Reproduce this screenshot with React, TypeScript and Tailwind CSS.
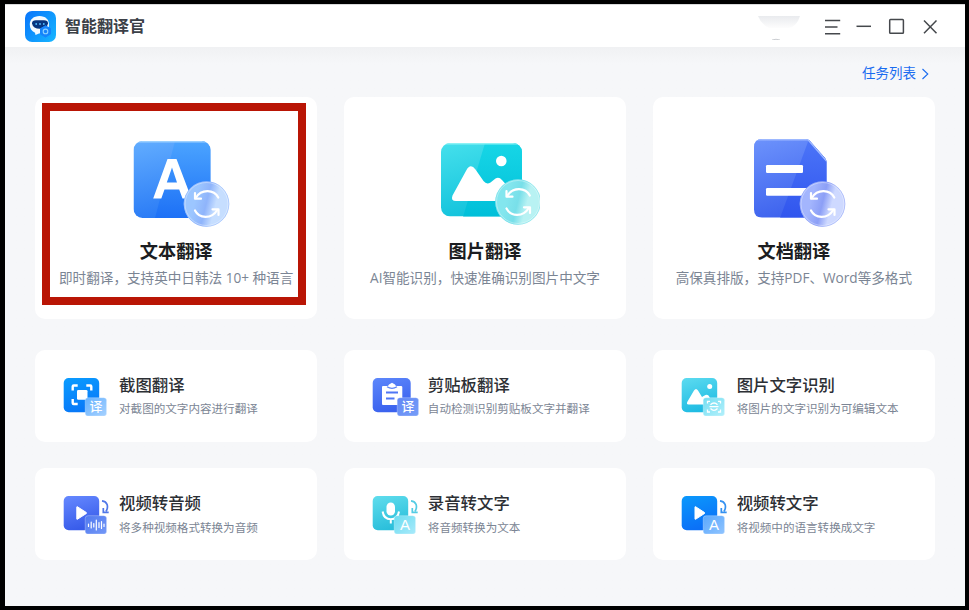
import React from "react";

const FONT = "font-['Open_Sans','Noto_Sans_CJK_SC',sans-serif]";

type Stops = [string, string];

function Gradient({ id, stops, x2 = 0.3 }: { id: string; stops: Stops; x2?: number }) {
  return (
    <linearGradient id={id} x1="0" y1="0" x2={x2} y2="1">
      <stop offset="0" stopColor={stops[0]} />
      <stop offset="1" stopColor={stops[1]} />
    </linearGradient>
  );
}

/* Round glass badge with two circular arrows */
function SyncBadge({ id, cx, cy, tones }: { id: string; cx: number; cy: number; tones: [string, string, string] }) {
  return (
    <g transform={`translate(${cx} ${cy})`}>
      <defs>
        <linearGradient id={id} x1="0" y1="0.35" x2="1" y2="0.6">
          <stop offset="0" stopColor={tones[0]} />
          <stop offset="0.25" stopColor={tones[0]} />
          <stop offset="0.5" stopColor={tones[1]} />
          <stop offset="0.7" stopColor={tones[2]} />
          <stop offset="1" stopColor={tones[2]} />
        </linearGradient>
      </defs>
      <circle r="22.8" fill={`url(#${id})`} />
      <circle r="22.3" fill="none" stroke={tones[1]} strokeOpacity="0.5" strokeWidth="1" />
      <circle r="21.5" fill="none" stroke="#fff" strokeOpacity="0.35" strokeWidth="1" />
      <g fill="none" stroke="#fff" strokeWidth="2.2" strokeLinecap="round" strokeLinejoin="round">
        <path d="M11.800 -6.500C7.500 -14.500 -5 -15.500 -10.800 -6" />
        <path d="M-11.500 -11V-5.300H-5.500" />
        <path d="M-11.500 6.500C-7.500 14.500 5 15.500 10.800 6" />
        <path d="M12 11V5.300H6" />
      </g>
    </g>
  );
}

function TextArt() {
  return (
    <svg width="110" height="96" viewBox="0 0 110 96" className="block">
      <defs>
        <Gradient id="ta" stops={["#62adff", "#2b7cf6"]} x2={0.2} />
        <Gradient id="tb" stops={["#4ba4ff", "#1d70f6"]} x2={0} />
        <clipPath id="tc"><rect x="12.5" y="6" width="77" height="77" rx="9" /></clipPath>
      </defs>
      <g clipPath="url(#tc)">
        <rect x="12.5" y="6" width="77" height="77" fill="url(#ta)" />
        <path d="M54 6H90V83H34Z" fill="url(#tb)" />
        <path d="M12 6.7H90" stroke="#9bd0ff" strokeWidth="1.5" />
      </g>
      <path fillRule="evenodd" fill="#fff" d="M46.500 24H55.500L70.500 63.500H61.500L58.200 54.500H43.500L40.300 63.500H32.200ZM51 32.500L45.800 47.500H56Z" />
      <SyncBadge id="ts" cx={85.5} cy={69} tones={["#9cc6ff", "#8fb4fb", "#c6deff"]} />
    </svg>
  );
}

function ImageArt() {
  return (
    <svg width="110" height="96" viewBox="0 0 110 96" className="block">
      <defs>
        <Gradient id="ia" stops={["#45e0ec", "#13c3dc"]} />
        <Gradient id="ib" stops={["#17d6e6", "#00bfd9"]} x2={0} />
        <clipPath id="ic"><rect x="11" y="8" width="81" height="73.500" rx="9" /></clipPath>
      </defs>
      <g clipPath="url(#ic)">
        <rect x="11" y="8" width="81" height="73.500" fill="url(#ia)" />
        <path d="M55 8H92V82H33Z" fill="url(#ib)" />
        <path d="M11 8.700H92" stroke="#8bf2f5" strokeWidth="1.500" />
      </g>
      <circle cx="71.300" cy="26" r="5.300" fill="#fff" />
      <path d="M22.500 60.500L36.500 35Q40.500 28 45.500 34.500L53.500 46Q56.500 50 60.500 47.500L65.500 43.500Q69 41.500 72 45L80 54V66H26Q20.500 66 22.500 60.500Z" fill="#fff" />
      <SyncBadge id="is" cx={88} cy={67} tones={["#83e6ee", "#78dfe9", "#b8f2f3"]} />
    </svg>
  );
}

function DocArt() {
  return (
    <svg width="110" height="96" viewBox="0 0 110 96" className="block">
      <defs>
        <Gradient id="da" stops={["#6d93fc", "#3e63ee"]} />
        <Gradient id="db" stops={["#4c75f8", "#3055ee"]} x2={0} />
        <clipPath id="dc">
          <path d="M23 4H67Q69.500 4 71 6L86 23Q87.500 25 87.500 27V82.500H23Q15 82.500 15 74.500V12Q15 4 23 4Z" />
        </clipPath>
      </defs>
      <g clipPath="url(#dc)">
        <rect x="15" y="4" width="73" height="79" fill="url(#da)" />
        <path d="M70 4H88V83H41Z" fill="url(#db)" />
        <path d="M15 4.700H69L87.500 26" stroke="#9db8ff" strokeWidth="1.400" fill="none" />
      </g>
      <rect x="27" y="30" width="37" height="8" rx="1.300" fill="#fff" />
      <rect x="27" y="53" width="42" height="7.700" rx="1.300" fill="#fff" />
      <SyncBadge id="ds" cx={83.5} cy={69} tones={["#a3b5fd", "#8c9ff6", "#ced9ff"]} />
    </svg>
  );
}

/* Small tile: a rounded square with a translucent badge at its lower right */
function Tile({
  id, stops, badge, width = 35.5, badgeX = 25, arrow, mark, children,
}: {
  id: string; stops: Stops; badge: Stops; width?: number; badgeX?: number; arrow?: string;
  mark: React.ReactNode; children: React.ReactNode;
}) {
  return (
    <svg width="52" height="46" viewBox="0 0 52 46" className="block shrink-0">
      <defs>
        <Gradient id={id} stops={stops} />
        <Gradient id={`${id}b`} stops={badge} x2={1} />
      </defs>
      <rect x="3.700" y="4" width={width} height="34.300" rx="5" fill={`url(#${id})`} />
      {children}
      {arrow && (
        <g fill="none" stroke={arrow} strokeWidth="1.700">
          <path d="M42 8.800C47.500 9.500 48.800 14.500 46 19.500" />
          <path d="M43.300 16V20.400H48.700" />
        </g>
      )}
      <rect x={badgeX + 0.2} y="23.700" width="21.400" height="18.300" rx="2.800" fill={`url(#${id}b)`} stroke="#fff" strokeOpacity="0.35" strokeWidth="0.800" />
      <g transform={`translate(${badgeX} 23.5)`}>{mark}</g>
    </svg>
  );
}

function Glyph({ text, size = 13 }: { text: string; size?: number }) {
  return (
    <text x="11" y={size === 13 ? 13.6 : 14.8} textAnchor="middle" fontSize={size} fill="#fff" className="font-['Liberation_Sans','Noto_Sans_CJK_SC',sans-serif] font-medium">
      {text}
    </text>
  );
}

const ShotTile = () => (
  <Tile id="t1" stops={["#0a9cff", "#0879f8"]} badge={["#66b2ff", "#a6d1ff"]} mark={<Glyph text="译" />}>
    <path d="M12.700 16.500V12.500Q12.700 11.500 13.700 11.500H17.700M26.300 11.500H30.300Q31.300 11.500 31.300 12.500V16.500M12.700 25V29Q12.700 30 13.700 30H17.700" fill="none" stroke="#fff" strokeWidth="2.400" />
    <rect x="17" y="16" width="10.500" height="9.800" rx="1.300" fill="#fff" />
  </Tile>
);

const ClipTile = () => (
  <Tile id="t2" stops={["#5d87fb", "#3b62ee"]} badge={["#6288f5", "#769df8"]} width={38} badgeX={28} mark={<Glyph text="译" />}>
    <path d="M13 13Q13 12 14 12H18.500Q19.500 11.700 20 10.500L23 8.700L26 10.500Q26.500 12 28 12H32Q33.300 12 33.300 13V31H14Q13 31 13 30Z" fill="#fff" />
    <path d="M18 12.800Q23 16 28 12.800" stroke="#5c83f7" strokeWidth="1.200" fill="none" />
    <path d="M17 18.500H29M17 24.500H25.500" stroke="#4f76f5" strokeWidth="1.900" />
  </Tile>
);

const OcrTile = () => (
  <Tile
    id="t3" stops={["#5ddbf0", "#20bce3"]} badge={["#73def2", "#b3f0fb"]}
    mark={
      <g fill="none" stroke="#fff" strokeWidth="1.300">
        <path d="M4.500 6V3.800H7M15 3.800H17.500V6M17.500 12V14.500H15M7 14.500H4.500V12" />
        <path d="M7.500 7.200Q11 3.800 14.500 7.200M7.500 11Q11 14.800 14.500 11M6.500 9.200H15.500" />
      </g>
    }
  >
    <circle cx="31.700" cy="12.500" r="2.500" fill="#fff" />
    <path d="M9.500 27.500L16 16.500Q18 13.500 20 16.500L24 23Q25.500 22 27.500 21Q30 20 31.500 23L33 30.500H10.500Q8 30.500 9.500 27.500Z" fill="#fff" />
  </Tile>
);

const AudioTile = () => (
  <Tile
    id="t4" stops={["#6689ff", "#385cea"]} badge={["#5179ef", "#7398f7"]} arrow="#5077e8"
    mark={<path d="M3.500 8.500V11M6.200 6.500V12.500M8.800 8V11.500M11.300 4.500V14.500M14 7V12M16.500 6V13M19 8.500V11" stroke="#fff" strokeWidth="1.200" strokeLinecap="round" />}
  >
    <path d="M16.800 15V27Q16.800 27.500 17.300 27.300L26.300 21.500Q26.800 21 26.300 20.500L17.300 14.700Q16.800 14.500 16.800 15Z" fill="#fff" stroke="#fff" strokeLinejoin="round" />
  </Tile>
);

const MicTile = () => (
  <Tile id="t5" stops={["#60dded", "#2bbfdb"]} badge={["#6bdcf0", "#a9eafb"]} arrow="#54cce4" mark={<Glyph text="A" size={15} />}>
    <rect x="17.500" y="10.500" width="8.500" height="13" rx="4.250" fill="#fff" />
    <path d="M13.600 19.500Q14.800 27.300 21.800 27.300Q28.800 27.300 30 19.500M21.800 27.300V31.500" fill="none" stroke="#fff" strokeWidth="2" />
  </Tile>
);

const VideoTile = () => (
  <Tile id="t6" stops={["#0b99fc", "#0b70f7"]} badge={["#5aa8fd", "#90c4ff"]} arrow="#3491f1" mark={<Glyph text="A" size={15} />}>
    <path d="M17 15V27Q17 27.500 17.500 27.300L26.500 21.500Q27 21 26.500 20.500L17.500 14.700Q17 14.500 17 15Z" fill="#fff" stroke="#fff" strokeLinejoin="round" />
  </Tile>
);

const features = [
  { title: "文本翻译", desc: "即时翻译，支持英中日韩法 10+ 种语言", Art: TextArt, selected: true },
  { title: "图片翻译", desc: "AI智能识别，快速准确识别图片中文字", Art: ImageArt, selected: false },
  { title: "文档翻译", desc: "高保真排版，支持PDF、Word等多格式", Art: DocArt, selected: false },
];

const tools = [
  { title: "截图翻译", desc: "对截图的文字内容进行翻译", Icon: ShotTile },
  { title: "剪贴板翻译", desc: "自动检测识别剪贴板文字并翻译", Icon: ClipTile },
  { title: "图片文字识别", desc: "将图片的文字识别为可编辑文本", Icon: OcrTile },
  { title: "视频转音频", desc: "将多种视频格式转换为音频", Icon: AudioTile },
  { title: "录音转文字", desc: "将音频转换为文本", Icon: MicTile },
  { title: "视频转文字", desc: "将视频中的语言转换成文字", Icon: VideoTile },
];

function Logo() {
  return (
    <svg width="31" height="31" viewBox="0 0 31 31" className="block">
      <defs>
        <linearGradient id="lg" x1="0" y1="0" x2="1" y2="0.8">
          <stop offset="0" stopColor="#0874fb" />
          <stop offset="1" stopColor="#16b1ff" />
        </linearGradient>
      </defs>
      <rect width="31" height="31" rx="7" fill="url(#lg)" />
      <path d="M14.500 5C20.500 5 24 8.500 24 13.500C24 19 20 22 14 22.500L10.500 24L10 21.800C6.500 20 4.800 17.300 4.800 13.500C4.800 8.500 8.500 5 14.500 5Z" fill="#f4faff" />
      <path d="M11 9.300H19Q23 9.300 23 12.500Q22 17.800 15 17.800Q8 17.800 7 12.500Q7 9.300 11 9.300Z" fill="#07357f" />
      <g fill="#53bfff"><circle cx="11.200" cy="13" r="0.900" /><circle cx="15" cy="13" r="0.900" /><circle cx="18.800" cy="13" r="0.900" /></g>
      <path d="M20.500 14.800L25.500 17.600V23L20.500 26L15.500 23V17.600Z" fill="#1684fb" stroke="#1684fb" strokeLinejoin="round" />
      <circle cx="20.500" cy="20.400" r="2.300" fill="none" stroke="#8bd2ff" strokeWidth="1.100" />
    </svg>
  );
}

function Header() {
  return (
    <header className="flex h-[43px] items-center border-t border-[#d9dadb] bg-white pl-5 pr-[27px]">
      <Logo />
      <h1 className="ml-[9px] text-[16px] font-bold leading-5 text-[#3b4047]">智能翻译官</h1>
      <svg width="46" height="28" viewBox="0 0 46 28" className="ml-auto mr-[22px] block">
        <defs>
          <linearGradient id="av" x1="0" y1="0" x2="0" y2="1">
            <stop offset="0" stopColor="#e9ebee" />
            <stop offset="1" stopColor="#fdfdfd" />
          </linearGradient>
        </defs>
        <path d="M1 4H43Q40 14 32 16H12Q4 12 1 4Z" fill="url(#av)" />
        <path d="M15 28Q19 26.500 23 28" stroke="#c9ccd0" fill="none" />
      </svg>
      <div className="flex pt-px text-[#45484c]">
        <svg width="113" height="18" viewBox="0 0 113 18" fill="none" stroke="currentColor" strokeWidth="1.500" className="block">
          <path d="M0 2.400H15.200M0 9H12.500M0 15.800H15.200" />
          <path d="M31.500 8.300H46" />
          <rect x="64.700" y="1.600" width="13.700" height="13.700" rx="0.800" />
          <path d="M99 2.500L111.500 15.200M111.500 2.500L99 15.200" strokeWidth="1.500" />
        </svg>
      </div>
    </header>
  );
}

export default function App() {
  return (
    <div className={`h-[610px] w-[969px] bg-black pb-[4px] pl-[5px] pr-[4px] pt-[4px] ${FONT}`}>
      <div className="flex h-full flex-col overflow-hidden bg-[#f6f7f9]">
        <Header />
        <main className="flex flex-1 flex-col bg-linear-to-b from-[#f0f1f3] to-[#f6f7f9] to-3% px-[30px]">
          <div className="flex h-[50px] items-center justify-end pr-[5px] pt-px text-[#1a6cf0]">
            <a className="text-[13.5px] leading-5">任务列表</a>
            <svg width="9" height="12" viewBox="0 0 9 12" fill="none" stroke="currentColor" strokeWidth="1.100" className="ml-[5px] mt-[2px] block">
              <path d="M1.500 1L6.800 6L1.500 11" />
            </svg>
          </div>

          <section className="grid h-[222px] grid-cols-3 gap-x-[26.5px]">
            {features.map(({ title, desc, Art, selected }) => (
              <article key={title} className="relative flex flex-col items-center rounded-[10px] bg-white pt-[38px]">
                <Art />
                <h2 className="mt-[8px] whitespace-nowrap text-[18.2px] font-bold leading-6 text-[#1b1d21]">{title}</h2>
                <p className="mt-[5px] whitespace-nowrap text-[13.6px] leading-5 text-[#7b8594]">{desc}</p>
                {selected && <div className="absolute left-[7px] top-[6px] h-[202px] w-[264px] border-8 border-[#b91505]" />}
              </article>
            ))}
          </section>

          <section className="mt-[31px] grid auto-rows-[92px] grid-cols-3 gap-x-[26.5px] gap-y-[26px]">
            {tools.map(({ title, desc, Icon }, index) => (
              <article key={title} className="flex items-start rounded-[10px] bg-white pl-[25px] pt-[24px]">
                <Icon />
                <div className="ml-[7px] whitespace-nowrap">
                  <h3 className="text-[16.4px] font-medium leading-[22px] text-[#2c2f34]">{title}</h3>
                  <p className={`text-[11.57px] leading-[20px] text-[#7b8594] ${index < 3 ? "mt-[3px]" : "mt-[4px]"}`}>{desc}</p>
                </div>
              </article>
            ))}
          </section>
        </main>
      </div>
    </div>
  );
}
